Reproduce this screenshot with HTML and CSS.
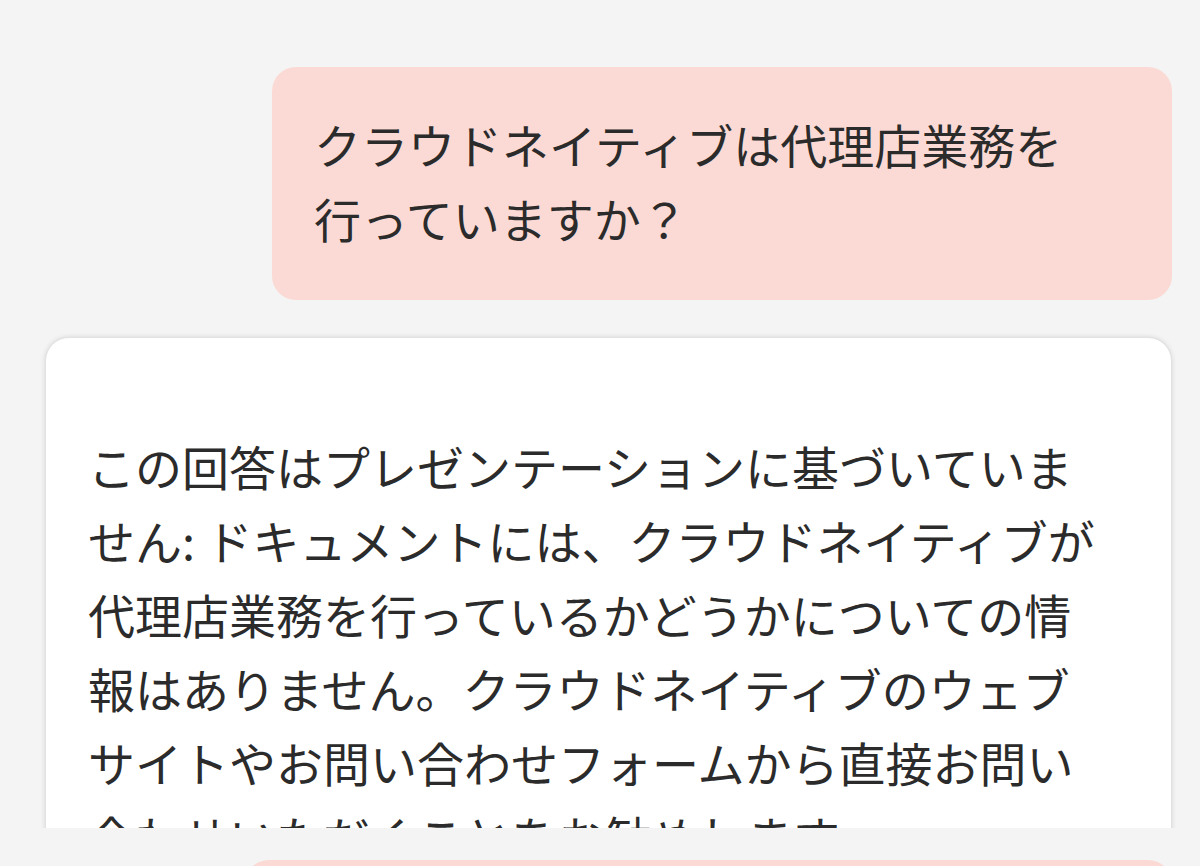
FILE: index.html
```html
<!DOCTYPE html>
<html lang="ja">
<head>
    <meta charset="UTF-8">
    <meta name="viewport" content="width=device-width, initial-scale=1.0">
    <title>チャット</title>
    <link rel="stylesheet" href="styles.css">
</head>
<body>

    <div class="chat">
        <div class="msg-user">
            クラウドネイティブは代理店業務を行っていますか？
        </div>

        <div class="msg-bot-clip">
            <div class="msg-bot">
                <p>この回答はプレゼンテーションに基づいていません: ドキュメントには、クラウドネイティブが代理店業務を行っているかどうかについての情報はありません。クラウドネイティブのウェブサイトやお問い合わせフォームから直接お問い合わせいただくことをお勧めします。</p>
            </div>
        </div>

        <div class="msg-user msg-user-wide"></div>
    </div>

</body>
</html>
```

FILE: styles.css
```css
/* General Styles */
html, body {
    height: 100%;
}

body {
    margin: 0;
    padding: 0;
    background-color: #f4f4f4;
    color: #2b2b2b;
    font-family: "Noto Sans CJK JP", "Noto Sans", sans-serif;
    font-size: 47px;
    line-height: 74px;
    overflow: hidden;
}

.chat {
    display: flex;
    flex-direction: column;
    padding: 67px 28px 0 45px;
}

/* User bubble */
.msg-user {
    align-self: flex-end;
    width: 780px;
    padding: 40px 78px 45px 42px;
    background: #fbdad5;
    border-radius: 24px;
}

.msg-user-wide {
    width: 927px;
    height: 160px;
    padding: 0;
    margin-top: 32px;
}

/* Bot card, cut off by the scroll area */
.msg-bot-clip {
    height: 491px;
    overflow: hidden;
    margin: 33px -4px 0 -4px;
    padding: 4px 4px 0 4px;
}

.msg-bot {
    background: #fff;
    border: 1px solid #e2e2e2;
    border-radius: 24px;
    box-shadow: 0px 0px 5px rgba(0, 0, 0, 0.12);
    padding: 91px 60px 40px 42px;
}

.msg-bot p {
    margin: 0;
}
```
